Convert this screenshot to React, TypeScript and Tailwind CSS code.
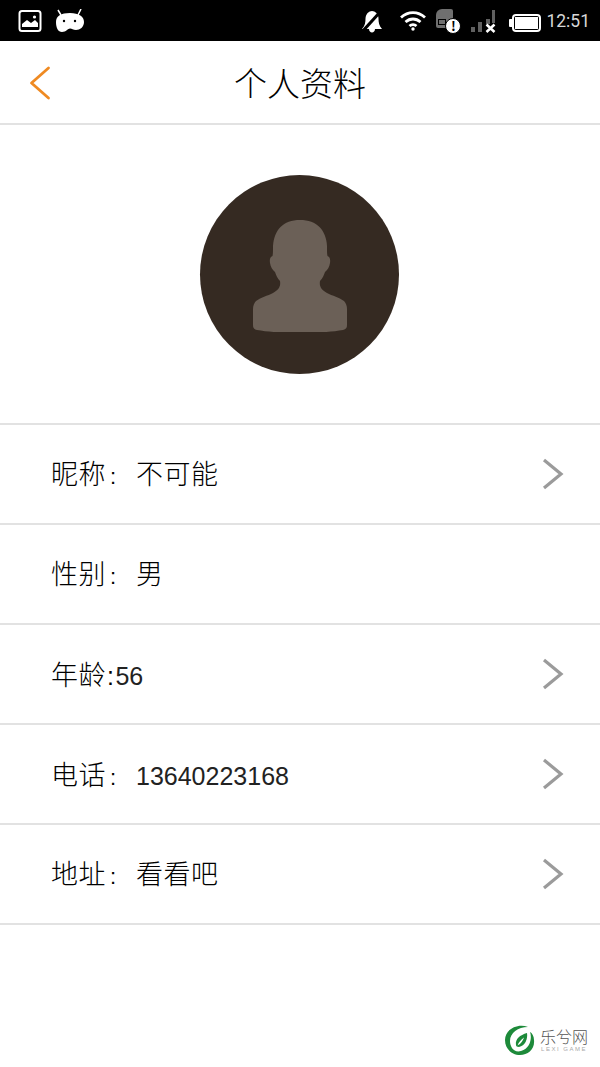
const rows = [
  { label: '昵称', colon: '：', value: '不可能', arrow: true },
  { label: '性别', colon: '：', value: '男', arrow: false },
  { label: '年龄', colon: ':', value: '56', arrow: true },
  { label: '电话', colon: '：', value: '13640223168', arrow: true },
  { label: '地址', colon: '：', value: '看看吧', arrow: true },
]

function StatusBar() {
  return (
    <div className="flex h-[41px] items-center bg-black pl-[18px] pr-[10px] font-normal text-white">
      {/* picture notification */}
      <svg width="24" height="24" viewBox="0 0 24 24" fill="none">
        <rect x="1.500" y="2" width="21" height="20" rx="2.500" stroke="white" strokeWidth="2" />
        <path d="M4 18v-3l5-4 4 3 4-3 3 3v4z" fill="white" />
        <circle cx="16.500" cy="8" r="1.600" fill="white" />
      </svg>
      {/* android */}
      <svg className="ml-[13px]" width="30" height="24" viewBox="0 0 30 24">
        <path d="M3 1l3 5M26 0l-3 6" stroke="white" strokeWidth="1.500" />
        <path d="M1 13c0-6 5-9 14-9s14 3.500 14 9c0 5-4 8-8 8-3 0-4-1.500-6-1.500S11 23 7 23c-4 0-6-4-6-10z" fill="white" />
        <circle cx="9" cy="12" r="1.200" fill="black" />
        <circle cx="20" cy="12" r="1.200" fill="black" />
      </svg>
      <div className="ml-auto flex items-center pt-[1px]">
        {/* muted bell */}
        <svg width="22" height="23" viewBox="0 0 22 23">
          <path d="M1 19c3-3 3.500-7 3.500-10.500C4.500 4 8 1 11 1s6.500 3 6.500 7.500c0 3.500.5 7.500 3.500 10.500H14c0 2-1.500 3.500-3 3.500S8 21 8 19z" fill="white" />
          <path d="M1 22L20 1" stroke="black" strokeWidth="3" />
        </svg>
        {/* wifi */}
        <svg className="ml-[17px]" width="26" height="20" viewBox="0 0 26 20" fill="none" stroke="white" strokeWidth="2.800">
          <path d="M1 6.500c7-6.500 17-6.500 24 0" />
          <path d="M5.500 11c4.500-4 10.500-4 15 0" />
          <path d="M9.500 15c2-1.800 5-1.800 7 0" />
          <circle cx="13" cy="18" r="1.700" fill="white" stroke="none" />
        </svg>
        {/* sim with alert */}
        <div className="relative ml-[10px] h-[25px] w-[25px]">
          <div className="absolute left-0 top-0 h-[19px] w-[17px] rounded-[2px] rounded-tl-[6px] bg-[#6f6f6f]" />
          <div className="absolute left-[2px] top-[10px] h-[6px] w-[8px] border border-black" />
          <div className="absolute bottom-0 right-0 flex h-[16px] w-[16px] items-center justify-center rounded-full border border-black bg-white text-[13px] font-bold leading-none text-black">!</div>
        </div>
        {/* signal */}
        <svg className="ml-[10px]" width="25" height="23" viewBox="0 0 25 23">
          <rect x="0" y="17" width="4" height="5" fill="#606060" />
          <rect x="7" y="12" width="4" height="10" fill="#606060" />
          <rect x="15" y="9" width="4" height="5" fill="#606060" />
          <rect x="21" y="0" width="3" height="13" fill="#606060" />
          <path d="M15.500 14.500l8 7.500M23.500 14.500l-8 7.500" stroke="white" strokeWidth="2.500" />
        </svg>
        {/* battery */}
        <div className="ml-[13px] mt-[3px] flex items-center">
          <div className="h-[8px] w-[3px] rounded-l-[1px] bg-white" />
          <div className="h-[18px] w-[29px] rounded-[4px] border-2 border-white p-[1px]">
            <div className="h-full w-full bg-white" />
          </div>
        </div>
        <span className="ml-[5px] mt-[1px] text-[17.500px] leading-none text-[#d8d8d8] [font-family:Roboto,sans-serif]">12:51</span>
      </div>
    </div>
  )
}

function Avatar() {
  return (
    <div className="flex h-[300px] items-center justify-center border-b-2 border-[#e2e2e2] pr-[1px]">
      <div className="flex h-[199px] w-[199px] items-center justify-center rounded-full bg-[#352a22]">
        <svg width="94" height="112" viewBox="0 0 94 112" className="mt-[3px]">
          <path
            d="M47 0c17 0 26 10 27 26 0 5 0 8 .500 10 2.500 1 3 3.500 2.500 7-.500 4-2.500 7-5 9-1 3-2.500 6.500-5 9-1 6 2 9 7 12 5 2.500 13 5 17 8 2 2 3 5 3 8v16c0 3-1 4-4 5-12 2-27 3-43 3s-31-1-43-3c-3-1-4-2-4-5V89c0-3 1-6 3-8 4-3 12-5.500 17-8 5-3 8-6 7-12-2.500-2.500-4-6-5-9-2.500-2-4.500-5-5-9-.500-3.500 0-6 2.500-7 .500-2 .500-5 .500-10C21 10 30 0 47 0z"
            fill="#6b6057"
          />
        </svg>
      </div>
    </div>
  )
}

function Logo() {
  return (
    <div className="absolute bottom-[11px] right-[12px] flex items-center">
      <svg width="32" height="32" viewBox="0 0 32 32">
        <path d="M24 3C14-1 1 5 1 16c0 9 7 15 15 15 8 0 15-6 14-15 0-4-2-7-4-8 2 5 1 16-9 19C10 29 6 23 6 17 6 9 14 3 24 3z" fill="#1d8a3a" />
        <path d="M12 21c-1-6 4-10 11-12 1 6-2 13-8 14-2 0-3-1-3-2z" fill="#1d8a3a" />
        <path d="M13.500 21.500c1-3 3.500-6 6.500-8-1 3-3 6.500-6.500 8z" fill="white" />
      </svg>
      <div className="ml-[4px] flex flex-col items-center font-light">
        <span className="text-[16px] leading-[18px] text-[#555]">乐兮网</span>
        <span className="text-[6px] leading-[8px] tracking-[1.500px] text-[#aaa] [font-family:'Liberation_Sans',sans-serif]">LEXI GAME</span>
      </div>
    </div>
  )
}

export default function App() {
  return (
    <div className="relative h-[1067px] w-[600px] overflow-hidden bg-white font-light [font-family:'Noto_Sans_CJK_SC',sans-serif]">
      <StatusBar />

      {/* Header */}
      <div className="relative flex h-[84px] items-center justify-center border-b-2 border-[#e2e2e2]">
        <svg className="absolute left-[28px] top-[24px]" width="24" height="36" viewBox="0 0 24 36" fill="none">
          <path d="M20.500 3L3.500 18l17 15" stroke="#ef8a22" strokeWidth="2.800" strokeLinecap="round" strokeLinejoin="round" />
        </svg>
        <h1 className="text-[33px] font-light leading-none text-black">个人资料</h1>
      </div>

      <Avatar />

      {/* Rows */}
      {rows.map(row => (
        <div key={row.label} className="flex h-[100px] items-center border-b-2 border-[#e2e2e2] pl-[51px] pr-[35px] text-black">
          <div className="flex items-baseline text-[27px] leading-none tracking-[0.5px]">
            <span>{row.label}</span>
            {row.colon === ':' ? (
              <span className="ml-[1px] text-[25px] [font-family:'Liberation_Sans',sans-serif]">:</span>
            ) : (
              <span className="ml-[4px] w-[26px] text-[22px] [font-family:'Liberation_Sans',sans-serif]">:</span>
            )}
            <span className={`${row.colon === ':' ? 'ml-[1px]' : ''} [font-family:'Liberation_Sans','Noto_Sans_CJK_SC',sans-serif] ${/\d/.test(row.value) ? 'text-[25px] tracking-normal text-[#222]' : ''}`}>{row.value}</span>
          </div>
          {row.arrow && (
            <svg className="ml-auto" width="24" height="34" viewBox="0 0 24 34" fill="none">
              <path d="M3 3l17 14L3 31" stroke="#9b9b9b" strokeWidth="3.200" />
            </svg>
          )}
        </div>
      ))}

      <Logo />
    </div>
  )
}
